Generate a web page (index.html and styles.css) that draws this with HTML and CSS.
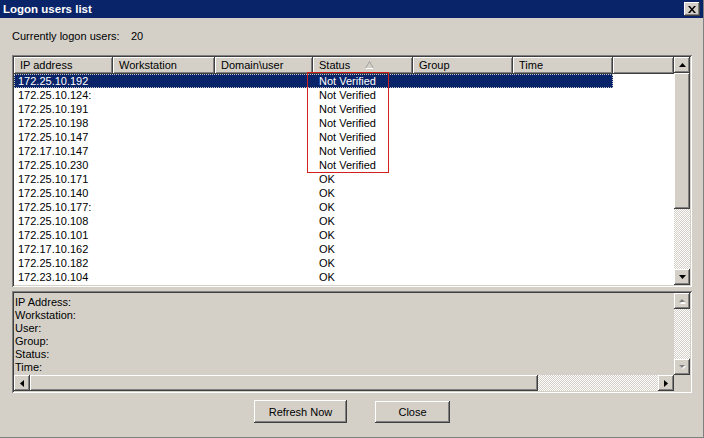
FILE: index.html
```html
<!DOCTYPE html>
<html lang="en">
<head>
    <meta charset="UTF-8">
    <title>Logon users list</title>
    <link rel="stylesheet" href="styles.css">
</head>
<body>
    <div class="window">
        <div class="titlebar">
            <span>Logon users list</span>
            <span class="title-close">
                <svg width="8" height="7" viewBox="0 0 8 7"><path d="M0 0h2l2 2.5L6 0h2L5 3.5 8 7H6L4 4.5 2 7H0l3-3.5z" fill="#000"/></svg>
            </span>
        </div>

        <div class="content">
            <div class="count-row">
                <span class="count-label">Currently logon users:</span>
                <span>20</span>
            </div>

            <div class="listview sunken">
                <div class="list-main">
                    <div class="list-head">
                        <div class="hcell">IP address</div>
                        <div class="hcell">Workstation</div>
                        <div class="hcell">Domain\user</div>
                        <div class="hcell">Status
                            <svg class="sort" width="9" height="8" viewBox="0 0 9 8"><path d="M4.5 0.5L8.5 7.5H0.5z" fill="none" stroke="#a0a0a0"/><path d="M0.5 7.5H8.5" stroke="#fff"/></svg>
                        </div>
                        <div class="hcell">Group</div>
                        <div class="hcell">Time</div>
                        <div class="hcell"></div>
                    </div>
                    <div class="rows">
                        <div class="row selected"><span>172.25.10.192</span><span></span><span></span><span>Not Verified</span><span></span><span></span></div>
                        <div class="row"><span>172.25.10.124:</span><span></span><span></span><span>Not Verified</span><span></span><span></span></div>
                        <div class="row"><span>172.25.10.191</span><span></span><span></span><span>Not Verified</span><span></span><span></span></div>
                        <div class="row"><span>172.25.10.198</span><span></span><span></span><span>Not Verified</span><span></span><span></span></div>
                        <div class="row"><span>172.25.10.147</span><span></span><span></span><span>Not Verified</span><span></span><span></span></div>
                        <div class="row"><span>172.17.10.147</span><span></span><span></span><span>Not Verified</span><span></span><span></span></div>
                        <div class="row"><span>172.25.10.230</span><span></span><span></span><span>Not Verified</span><span></span><span></span></div>
                        <div class="row"><span>172.25.10.171</span><span></span><span></span><span>OK</span><span></span><span></span></div>
                        <div class="row"><span>172.25.10.140</span><span></span><span></span><span>OK</span><span></span><span></span></div>
                        <div class="row"><span>172.25.10.177:</span><span></span><span></span><span>OK</span><span></span><span></span></div>
                        <div class="row"><span>172.25.10.108</span><span></span><span></span><span>OK</span><span></span><span></span></div>
                        <div class="row"><span>172.25.10.101</span><span></span><span></span><span>OK</span><span></span><span></span></div>
                        <div class="row"><span>172.17.10.162</span><span></span><span></span><span>OK</span><span></span><span></span></div>
                        <div class="row"><span>172.25.10.182</span><span></span><span></span><span>OK</span><span></span><span></span></div>
                        <div class="row"><span>172.23.10.104</span><span></span><span></span><span>OK</span><span></span><span></span></div>
                    </div>
                    <div class="mark"></div>
                </div>
                <div class="vscroll">
                    <div class="sbtn raised">
                        <svg width="7" height="4" viewBox="0 0 7 4"><path d="M3.5 0L7 4H0z" fill="#000"/></svg>
                    </div>
                    <div class="thumb raised"></div>
                    <div class="track"></div>
                    <div class="sbtn raised">
                        <svg width="7" height="4" viewBox="0 0 7 4"><path d="M0 0h7L3.5 4z" fill="#000"/></svg>
                    </div>
                </div>
            </div>

            <div class="details sunken">
                <div class="details-text">
                    <div>IP Address:</div>
                    <div>Workstation:</div>
                    <div>User:</div>
                    <div>Group:</div>
                    <div>Status:</div>
                    <div>Time:</div>
                </div>
                <div class="vscroll small">
                    <div class="sbtn raised">
                        <svg width="8" height="5" viewBox="0 0 8 5"><path d="M4 1L7 4H1z" fill="#fff" transform="translate(1 1)"/><path d="M4 0L7 3H1z" fill="#808080"/></svg>
                    </div>
                    <div class="track"></div>
                    <div class="sbtn raised">
                        <svg width="8" height="5" viewBox="0 0 8 5"><path d="M1 0h6L4 3z" fill="#fff" transform="translate(1 1)"/><path d="M1 0h6L4 3z" fill="#808080"/></svg>
                    </div>
                </div>
                <div class="hscroll">
                    <div class="sbtn raised">
                        <svg width="4" height="7" viewBox="0 0 4 7"><path d="M4 0v7L0 3.5z" fill="#000"/></svg>
                    </div>
                    <div class="hthumb raised"></div>
                    <div class="track"></div>
                    <div class="sbtn raised">
                        <svg width="4" height="7" viewBox="0 0 4 7"><path d="M0 0v7l4-3.5z" fill="#000"/></svg>
                    </div>
                </div>
                <div class="corner"></div>
            </div>

            <div class="buttons">
                <button class="btn raised">Refresh Now</button>
                <button class="btn raised close-btn">Close</button>
            </div>
        </div>
    </div>
</body>
</html>
```

FILE: styles.css
```css
body {
    margin: 0;
    background-color: #d4d0c8;
    font-family: 'Liberation Sans', Arial, sans-serif;
    font-size: 11px;
    color: #000;
}
.window {
    width: 704px;
    height: 438px;
    box-sizing: border-box;
    border-right: 1px solid #808080;
    border-bottom: 1px solid #808080;
    overflow: hidden;
}
.raised {
    background-color: #d4d0c8;
    box-shadow: inset -1px -1px #404040, inset 1px 1px #fff, inset -2px -2px #808080, inset 2px 2px #d4d0c8;
}
.sunken {
    box-sizing: border-box;
    box-shadow: inset 1px 1px #808080, inset -1px -1px #fff, inset 2px 2px #404040, inset -2px -2px #d4d0c8;
    padding: 2px;
}
.titlebar {
    height: 18px;
    background-color: #0a246a;
    color: #fff;
    font-weight: bold;
    font-size: 11.5px;
    display: flex;
    align-items: center;
    justify-content: space-between;
    padding: 0 3px 0 3px;
}
.title-close {
    width: 16px;
    height: 14px;
    display: flex;
    align-items: center;
    justify-content: center;
    background-color: #d4d0c8;
    box-shadow: inset -1px -1px #404040, inset 1px 1px #fff, inset -2px -2px #808080;
}
.content {
    padding: 12px 11px 0 12px;
}
.count-row {
    height: 13px;
    line-height: 13px;
    display: flex;
}
.count-label {
    width: 119px;
}
.listview {
    margin-top: 12px;
    height: 232px;
    background: #fff;
    display: flex;
}
.list-main {
    flex: 1;
    position: relative;
    overflow: hidden;
}
.list-head, .row {
    display: grid;
    grid-template-columns: 99px 102px 98px 100px 100px 100px;
}
.list-head {
    grid-template-columns: 99px 102px 98px 100px 100px 100px 1fr;
    height: 17px;
}
.hcell {
    position: relative;
    line-height: 16px;
    padding-left: 6px;
    background-color: #d4d0c8;
    box-shadow: inset -1px -1px #404040, inset 1px 1px #fff, inset -2px -2px #808080;
    white-space: nowrap;
}
.sort {
    position: absolute;
    left: 52px;
    top: 4px;
}
.rows {
    padding-top: 0;
}
.row {
    width: 599px;
    height: 14px;
    line-height: 14px;
    white-space: nowrap;
}
.row span:first-child {
    padding-left: 4px;
}
.row span {
    padding-left: 6px;
}
.row.selected {
    background-color: #0a246a;
    color: #fff;
    outline: 1px dotted #c8c8c8;
    outline-offset: -1px;
}
.mark {
    position: absolute;
    left: 293px;
    top: 15px;
    width: 80px;
    height: 99px;
    border: 1px solid #d02020;
}
.vscroll {
    width: 16px;
    display: flex;
    flex-direction: column;
}
.sbtn {
    width: 16px;
    height: 16px;
    flex: none;
    display: flex;
    align-items: center;
    justify-content: center;
}
.thumb {
    height: 136px;
}
.track {
    flex: 1;
    background: repeating-conic-gradient(#fff 0 25%, #d4d0c8 0 50%) 0 0 / 2px 2px;
}
.details {
    margin-top: 4px;
    height: 102px;
    background-color: #d4d0c8;
    display: grid;
    grid-template-columns: 1fr 16px;
    grid-template-rows: 1fr 16px;
}
.details-text {
    padding: 3px 0 0 1px;
    line-height: 13px;
}
.hscroll {
    display: flex;
}
.hthumb {
    width: 508px;
}
.corner {
    background-color: #d4d0c8;
}
.buttons {
    display: flex;
    justify-content: center;
    align-items: flex-start;
    gap: 28px;
    margin-top: 7px;
}
.btn {
    font-family: inherit;
    font-size: 11px;
    border: none;
    width: 93px;
    height: 23px;
    padding: 0;
    color: #000;
}
.close-btn {
    width: 75px;
    height: 22px;
    margin-top: 1px;
}
```
